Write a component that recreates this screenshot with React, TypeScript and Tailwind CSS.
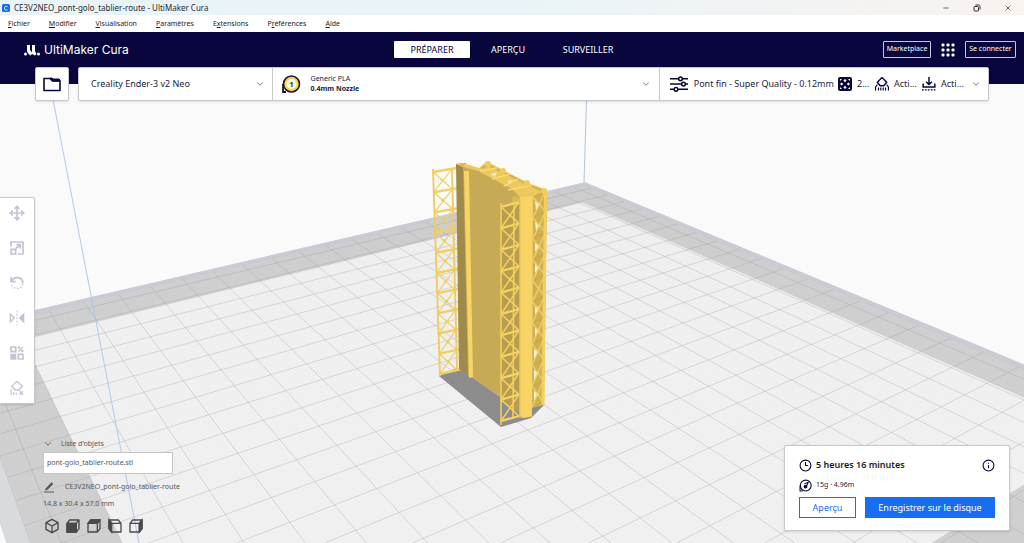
import React from "react";
import { ChevronDown, Clock3, Info, Minus, X, Move } from "lucide-react";

/* ---------- 3D scene: the build plate in perspective ---------- */

type Pt = [number, number];

const PLATE = 23;

// Plate coordinates (in centimetre cells from the back corner) to screen.
function project(u: number, v: number): Pt {
  const w = 1 - 0.01316 * u - 0.01903 * v;
  return [(584 - 26.74 * u + 4.11 * v) / w, (185 + 2.023 * u + 2.855 * v) / w];
}

function toPath(points: Pt[], close = true) {
  return "M" + points.map(([x, y]) => x.toFixed(1) + " " + y.toFixed(1)).join("L") + (close ? "Z" : "");
}

function quad(u0: number, u1: number, v0: number, v1: number) {
  return toPath([project(u0, v0), project(u1, v0), project(u1, v1), project(u0, v1)]);
}

function gridLines(step: number, start: number) {
  const parts: string[] = [];
  for (let k = start; k < PLATE; k += step) {
    parts.push(toPath([project(k, 0), project(k, PLATE)], false));
    parts.push(toPath([project(0, k), project(PLATE, k)], false));
  }
  return parts.join("");
}

const MAJOR = gridLines(1, 0.5);
const MINOR = gridLines(0.1, 0.1);

function truss(left: (t: number) => Pt, right: (t: number) => Pt, bays: number) {
  const parts: string[] = [];
  for (let i = 0; i < bays; i++) {
    const a = left(i / bays);
    const b = right(i / bays);
    const c = left((i + 1) / bays);
    const d = right((i + 1) / bays);
    parts.push(toPath([a, d], false), toPath([b, c], false));
  }
  return parts.join("");
}

function rungs(left: (t: number) => Pt, right: (t: number) => Pt, bays: number) {
  const parts: string[] = [];
  for (let i = 0; i <= bays; i++) parts.push(toPath([left(i / bays), right(i / bays)], false));
  return parts.join("");
}

const along = (x0: number, y0: number, x1: number, y1: number) => (t: number): Pt => [x0 + (x1 - x0) * t, y0 + (y1 - y0) * t];

const farL = along(433, 172, 440, 374);
const farM = along(452, 169, 457, 370);
const farR = along(457, 168, 461, 369);
const nearL = along(501, 207, 501, 421);
const nearR = along(519, 202, 519, 416);
const sideL = along(533, 197, 532, 407);
const sideR = along(546, 190, 543, 402);

function Scene() {
  return (
    <svg className="absolute inset-0 h-full w-full" viewBox="0 0 1024 543" preserveAspectRatio="xMidYMid slice" aria-hidden="true">
      <rect width="1024" height="543" fill="#fafafa" />
      <path d={quad(-0.25, PLATE + 0.4, -0.25, PLATE + 0.3)} fill="#d9dadb" />
      <path d={quad(-0.25, PLATE + 0.4, -0.25, 0) + quad(-0.25, 0, -0.25, PLATE)} fill="#caccd2" />
      <path d={quad(0, PLATE, 0, PLATE)} fill="#d0d0d0" />
      <path d={quad(1.4, 21.5, 1.65, 21.4)} fill="#f1f1f1" />
      <path d={MINOR} stroke="#9a9a9a" strokeOpacity="0.05" strokeWidth="0.5" fill="none" />
      <path d={MAJOR} stroke="#a0a0a0" strokeOpacity="0.36" strokeWidth="0.9" fill="none" />
      <path d={quad(0, PLATE, 0, PLATE)} stroke="#bcc6d8" strokeWidth="0.7" fill="none" />
      <path d="M587 84L584 183" stroke="#b3c4e0" fill="none" />
      <path d="M50 84L139 543" stroke="#a9c4ec" strokeWidth="0.9" fill="none" />

      <path d="M439 376L456 368L463 371L502 398L532 402L544 400V405L531 418L501 427Z" fill="#8c8c8c" />

      <path d={rungs(farL, farR, 10)} stroke="#f2cf62" strokeWidth="2.4" fill="none" />
      <path d={truss(farL, farM, 10)} stroke="#f2cf62" strokeWidth="1.2" fill="none" />
      <path d="M433 169L440 376M452 169L457 370" stroke="#f0cc5c" strokeWidth="1.9" fill="none" />
      {Array.from({ length: 10 }, (_, i) => {
        const [x, y] = farL((i + 0.5) / 10);
        return <circle key={i} cx={x + 9} cy={y - 2} r="1.7" fill="#f2cf62" />;
      })}

      <path d="M456 164L466 163L470 376L463 372L459 369Z" fill="#9f8a4c" />
      <path d="M463 167L518 189L521 410L501 398L473 378L468 376Z" fill="#c6aa56" />
      <path d="M464 171H469L473 377L469 378Z" fill="#f7d564" />

      <path d="M501 208L519 203V416L501 398Z" fill="#b79d50" />
      <path d="M502 402L519 413V417L502 421Z" fill="#8c8c8c" />
      <path d="M513 196L533 194L532 417L519 418V205L511 205Z" fill="#d9b957" />
      <path d="M520 197L533 194L532 416L524 418L520 416Z" fill="#f7d463" />
      <path d="M533 194L547 189L544 405L532 408Z" fill="#d0b050" />
      <path d="M535 201L541 204L536 211ZM535 222L541 225L536 231ZM535 243L540 246L535 252ZM535 264L540 267L535 273ZM535 305L540 308L535 315ZM535 327L540 330L535 337ZM534 349L539 352L534 359ZM534 370L539 373L534 380ZM534 391L539 394L534 400Z" fill="#f4efd9" />
      <path d={rungs(nearL, nearR, 10)} stroke="#f7d463" strokeWidth="2.2" fill="none" />
      <path d={truss(nearL, nearR, 10)} stroke="#f5d160" strokeWidth="1.5" fill="none" />
      <path d="M501 203V425M514 205L513 419" stroke="#f4cf5c" strokeWidth="1.6" fill="none" />
      <path d={rungs(sideL, sideR, 10)} stroke="#c9a94e" strokeWidth="1.5" fill="none" />
      <path d={truss(sideL, sideR, 10)} stroke="#f2cf60" strokeWidth="1.3" fill="none" />
      <path d="M545.5 190L543 405" stroke="#f3cf5e" strokeWidth="3" fill="none" />
      <path d="M520 199V416" stroke="#e0bf58" fill="none" />

      <path d="M456 164L463 163L479 168L486 162L492 164L503 170L526 182L547 190L534 196L519 197L510 190L478 173Z" fill="#ecc95c" />
      <path d="M463 167L478 171L512 189L520 197L504 194Z" fill="#c6aa56" />
      <path d="M482 168L488 165L503 172L527 184L543 191" stroke="#d5b351" strokeWidth="2" fill="none" />
      <path d="M480 171L497 168M492 179L510 174M504 186L518 179M508 190L532 185" stroke="#fadb72" strokeWidth="1.6" fill="none" />
      <path d="M490 174L497 172L495 177ZM507 181L513 180L510 184Z" fill="#efe6bf" />
      <circle cx="462" cy="165" r="2" fill="#d9b958" />
      {[[488, 164], [503, 171], [527, 183], [544, 191]].map(([x, y]) => (
        <circle key={x} cx={x} cy={y} r="3" fill="#f0cc5d" />
      ))}
    </svg>
  );
}

/* ---------- Icons ---------- */

type IconProps = { className?: string; children: React.ReactNode };

function Glyph({ className = "size-4", children }: IconProps) {
  return (
    <svg className={className} viewBox="0 0 24 24" fill="none" stroke="currentColor" strokeWidth="2" aria-hidden="true">
      {children}
    </svg>
  );
}

const toolIcons: { label: string; icon: React.ReactNode }[] = [
  { label: "Déplacer", icon: <Move className="size-4" strokeWidth={2.5} aria-hidden="true" /> },
  {
    label: "Mettre à l'échelle",
    icon: (
      <Glyph>
        <path d="M3 10V3h18v18h-8" strokeWidth="2.500" />
        <path d="M3 14h7v7H3zM10 13l7-6M11 7h6v6" strokeWidth="2.500" />
      </Glyph>
    ),
  },
  {
    label: "Tourner",
    icon: (
      <Glyph>
        <path d="M3 3v7h7M3.500 10A9 9 0 0 1 21 12" strokeWidth="2.500" />
        <path d="M21 13A9 9 0 0 1 4 15" strokeDasharray="2.500 2.500" />
      </Glyph>
    ),
  },
  {
    label: "Miroir",
    icon: (
      <Glyph>
        <path d="M2 6v12l6-6z" />
        <path d="M22 6v12l-6-6z" fill="currentColor" />
        <path d="M12 1v22" strokeDasharray="3 2" strokeWidth="1.500" />
      </Glyph>
    ),
  },
  {
    label: "Paramètres par modèle",
    icon: (
      <Glyph>
        <path d="M3 3h7v7H3zM14 14h7v7h-7z" strokeWidth="2.500" />
        <path d="M3 14h7v7H3z" fill="currentColor" />
        <path d="M14 10l7-7" />
        <circle cx="15" cy="4" r="1" />
        <circle cx="20" cy="9" r="1" />
      </Glyph>
    ),
  },
  {
    label: "Bloqueur de support",
    icon: (
      <Glyph>
        <path d="M12 2l8 7-5 6H9L4 9z" />
        <path d="M3 14v8M7 18v4M11 19v3M16 17l5 5M21 17l-5 5" />
      </Glyph>
    ),
  },
];

function Cube({ face }: { face?: "front" | "top" | "right" }) {
  return (
    <Glyph className="size-4">
      {face ? (
        <>
          <path d="M3 8l4-5h14v13l-4 5H3zM3 8h14v13M17 8l4-5" strokeLinejoin="round" />
          {face === "front" && <path d="M3 8h14v13H3z" fill="currentColor" />}
          {face === "top" && <path d="M3 8l4-5h14l-4 5z" fill="currentColor" />}
          {face === "right" && <path d="M17 8l4-5v13l-4 5z" fill="currentColor" />}
        </>
      ) : (
        <path d="M12 2l9 5v10l-9 5-9-5V7zM3 7l9 5 9-5M12 12v10" strokeLinejoin="round" />
      )}
    </Glyph>
  );
}

function CubeLeft() {
  return (
    <Glyph className="size-4">
      <path d="M7 8h14v13H7L3 16V3h14l4 5M7 8L3 3" strokeLinejoin="round" />
      <path d="M3 3l4 5v13l-4-5z" fill="currentColor" />
    </Glyph>
  );
}

/* ---------- Page ---------- */

const menus: [string, string, string][] = [
  ["", "F", "ichier"],
  ["", "M", "odifier"],
  ["", "V", "isualisation"],
  ["", "P", "aramètres"],
  ["E", "x", "tensions"],
  ["P", "r", "éférences"],
  ["", "A", "ide"],
];

function TitleBar() {
  return (
    <div className="flex h-[15px] items-center justify-between bg-gradient-to-r from-[#e9f4f8] from-50% to-[#faf3f0] pl-0.5 text-[8px] text-[#2a2a2a]">
      <div className="flex items-center gap-1">
        <svg className="size-2" viewBox="0 0 16 16" aria-hidden="true">
          <rect width="16" height="16" rx="3" fill="#196ef0" />
          <path d="M11 5H7L5 7v3l2 2h4" fill="none" stroke="#fff" strokeWidth="1.600" />
        </svg>
        <span>CE3V2NEO_pont-golo_tablier-route - UltiMaker Cura</span>
      </div>
      <div className="flex items-center">
        <button aria-label="Réduire" className="flex w-8 justify-center"><Minus className="size-2" /></button>
        <button aria-label="Restaurer" className="flex w-[30px] justify-center">
          <svg className="size-2" viewBox="0 0 16 16" fill="none" stroke="currentColor" strokeWidth="2" aria-hidden="true">
            <rect x="2" y="5" width="9" height="9" rx="2" />
            <path d="M5 2h6a3 3 0 0 1 3 3v6" />
          </svg>
        </button>
        <button aria-label="Fermer" className="flex w-8 justify-center"><X className="size-2" /></button>
      </div>
    </div>
  );
}

function MenuBar() {
  return (
    <nav className="flex h-[17px] items-center gap-[19px] bg-white px-2 pt-px text-[7px] text-[#222]">
      {menus.map(([a, b, c]) => (
        <button key={a + b + c}>
          {a}
          <span className="underline">{b}</span>
          {c}
        </button>
      ))}
    </nav>
  );
}

function Header() {
  return (
    <header className="grid h-[52px] grid-cols-[1fr_auto_1fr] items-start bg-[#08063d] pt-[9px] text-white">
      <div className="flex h-[18px] items-center gap-1 pl-6">
        <svg className="h-3 w-4" viewBox="0 0 32 24" fill="currentColor" aria-hidden="true">
          <circle cx="3" cy="20" r="3" />
          <circle cx="29" cy="20" r="3" />
          <path d="M6 2h6v10l4 5V2h6v12l3 6-3 3-6-3-3 3-4-3-3-5z" />
        </svg>
        <span className="font-['Inter',sans-serif] text-[12px]">UltiMaker Cura</span>
      </div>
      <nav className="flex text-[9px]">
        <button className="h-[17px] w-[76px] rounded-[1px] bg-white text-[#08063d]">PRÉPARER</button>
        <button className="h-[17px] w-[76px]">APERÇU</button>
        <button className="h-[17px] w-[84px]">SURVEILLER</button>
      </nav>
      <div className="flex items-center justify-end gap-[10px] pr-2 text-[7px]">
        <button className="h-[17px] w-12 rounded-[1px] border border-[#c9c9dd]">Marketplace</button>
        <button aria-label="Applications">
          <svg className="size-[14px]" viewBox="0 0 14 14" fill="currentColor" aria-hidden="true">
            {[0, 5, 10].map((y) => [0, 5, 10].map((x) => <rect key={x + "-" + y} x={x + 0.500} y={y + 0.500} width="3" height="3" rx="1" />))}
          </svg>
        </button>
        <button className="h-[17px] w-[51px] rounded-[1px] border border-[#c9c9dd]">Se connecter</button>
      </div>
    </header>
  );
}

const panel = "border border-[#c8c8cc] bg-white shadow-sm";

function ConfigBar() {
  return (
    <div className="relative -mt-[17px] flex h-[34px] gap-[9px] px-[35px] text-[9px] text-[#23233f]">
      <button aria-label="Ouvrir un fichier" className={"flex w-[34px] shrink-0 items-center justify-center rounded-[2px] " + panel}>
        <svg className="h-4 w-5 text-[#08063d]" viewBox="0 0 20 16" fill="none" stroke="currentColor" strokeWidth="1.600" strokeLinejoin="round" aria-hidden="true">
          <path d="M2 2.500h6l2.500 2.500H18v9.500H2z" />
          <path d="M8 2l3 3h7V4l-1-1h-6L10 2z" fill="currentColor" strokeWidth="1" />
        </svg>
      </button>
      <div className={"grid min-w-0 flex-1 grid-cols-[194fr_388fr_329fr] divide-x divide-[#c8c8cc] rounded-[2px] " + panel}>
        <button className="flex min-w-0 items-center justify-between pr-[7px] pl-3">
          <span>Creality Ender-3 v2 Neo</span>
          <ChevronDown className="size-[10px] text-[#666]" />
        </button>
        <button className="flex min-w-0 items-center px-2 text-left">
          <svg className="size-5" viewBox="0 0 20 20" aria-hidden="true">
            <path d="M2 10v8h3" fill="none" stroke="#1b1730" strokeWidth="1.800" />
            <circle cx="10.500" cy="10" r="8" fill="#f8d64e" stroke="#1b1730" strokeWidth="1.600" />
            <circle cx="10.500" cy="10" r="5" fill="#fffbe6" />
            <text x="10.500" y="12.500" textAnchor="middle" fontSize="7" fontWeight="700" fill="#1b1730">1</text>
          </svg>
          <span className="ml-2.5 flex-1 text-[7px] leading-[10px]">
            Generic PLA
            <br />
            <b>0.4mm Nozzle</b>
          </span>
          <ChevronDown className="size-[10px] text-[#666]" />
        </button>
        <button className="flex min-w-0 items-center pr-[7px] pl-[10px] whitespace-nowrap">
          <Glyph className="size-[18px] shrink-0 text-[#08063d]">
            <path d="M0 5h11M17 5h7M0 12h15M21 12h3M0 19h5M11 19h13" />
            <circle cx="14" cy="5" r="2.500" />
            <circle cx="18" cy="12" r="2.500" />
            <circle cx="8" cy="19" r="2.500" />
          </Glyph>
          <span className="ml-1.5 flex-1 text-left">Pont fin - Super Quality - 0.12mm</span>
          <svg className="size-[14px] shrink-0 text-[#08063d]" viewBox="0 0 14 14" aria-hidden="true">
            <rect width="14" height="14" rx="2" fill="currentColor" />
            <path d="M7 2l1.600 1.600L7 5.200 5.400 3.600zM7 8.800l1.600 1.600L7 12l-1.600-1.600zM3.600 5.400L5.200 7 3.600 8.600 2 7zM10.400 5.400L12 7l-1.600 1.600L8.800 7z" fill="#fff" />
            <path d="M2 2h2L2 4zM12 2v2l-2-2zM2 12v-2l2 2zM12 12h-2l2-2z" fill="#fff" />
          </svg>
          <span className="ml-[5px] w-[18px] text-left">2...</span>
          <Glyph className="size-[14px] shrink-0 text-[#08063d]">
            <path d="M12 1l8 8-5 6H9L4 9z" strokeWidth="2.500" />
            <path d="M4 13l-3 4v6M20 13l3 4v6M6 18v5M10 18v5M14 18v5M18 18v5" />
          </Glyph>
          <span className="ml-[5px] w-7 text-left">Acti...</span>
          <Glyph className="size-[14px] shrink-0 text-[#08063d]">
            <path d="M12 0v12M7 8l5 5 5-5M2 11v6h20v-6" strokeWidth="2.500" />
            <path d="M0 22h24" strokeDasharray="3 2" />
          </Glyph>
          <span className="ml-[5px] w-[30px] text-left">Acti...</span>
          <ChevronDown className="size-[10px] shrink-0 text-[#666]" />
        </button>
      </div>
    </div>
  );
}

function ObjectList() {
  return (
    <section className="pb-[9px] pl-[43px] text-[7px] text-[#555]">
      <button className="flex h-4 items-center gap-2">
        <ChevronDown className="size-[10px]" />
        Liste d'objets
      </button>
      <button className="flex h-[22px] w-[130px] items-center border border-[#c4c4c4] bg-white pl-[3px]">pont-golo_tablier-route.stl</button>
      <button className="mt-1 flex h-[18px] items-center gap-[10px]">
        <Glyph className="size-3">
          <path d="M5 16L17 3l3 3L9 17l-5 1z" fill="currentColor" strokeWidth="1" />
          <path d="M2 22h20" />
        </Glyph>
        CE3V2NEO_pont-golo_tablier-route
      </button>
      <p className="h-4 leading-4">14.8 x 30.4 x 57.0 mm</p>
      <div className="mt-1.5 flex gap-[5px] pl-px text-[#4a4a4a]">
        <button aria-label="Vue 3D"><Cube /></button>
        <button aria-label="Vue de face"><Cube face="front" /></button>
        <button aria-label="Vue de dessus"><Cube face="top" /></button>
        <button aria-label="Vue de gauche"><CubeLeft /></button>
        <button aria-label="Vue de droite"><Cube face="right" /></button>
      </div>
    </section>
  );
}

function PrintCard() {
  return (
    <section className={"mr-[14px] mb-3 w-[226px] rounded-[2px] px-[14px] pt-[9px] pb-3 text-[#23233f] " + panel}>
      <div className="flex h-5 items-center gap-1">
        <Clock3 className="size-[13px] text-[#08063d]" />
        <span className="flex-1 text-[9px] font-semibold text-[#1a1a1a]">5 heures 16 minutes</span>
        <button aria-label="Informations"><Info className="size-[13px] text-[#08063d]" /></button>
      </div>
      <div className="flex h-5 items-center gap-1 text-[7px]">
        <Glyph className="size-[13px] text-[#08063d]">
          <path d="M2 12v10h5" />
          <circle cx="12.500" cy="12" r="10" />
          <circle cx="12" cy="14" r="2.500" fill="currentColor" />
          <path d="M14 13l3-7-7 3" />
        </Glyph>
        <span>15g · 4.96m</span>
      </div>
      <div className="mt-0.5 flex gap-[9px] text-[9px]">
        <button className="h-[21px] w-[57px] border border-[#196ef0] text-[#196ef0]">Aperçu</button>
        <button className="h-[21px] flex-1 bg-[#196ef0] text-white">Enregistrer sur le disque</button>
      </div>
    </section>
  );
}

export default function App() {
  return (
    <div className="relative flex min-h-screen flex-col overflow-hidden font-['Noto_Sans','Open_Sans',sans-serif]">
      <Scene />
      <div className="relative">
        <TitleBar />
        <MenuBar />
        <Header />
        <ConfigBar />
      </div>
      <main className="relative flex flex-1 flex-col">
        <nav className={"mt-24 flex w-[35px] flex-col items-center gap-[19px] self-start rounded-r-[2px] border-l-0 py-[7px] text-[#c3c3d3] " + panel}>
          {toolIcons.map(({ label, icon }) => (
            <button key={label} aria-label={label}>{icon}</button>
          ))}
        </nav>
        <div className="mt-auto flex items-end justify-between">
          <ObjectList />
          <PrintCard />
        </div>
      </main>
    </div>
  );
}
